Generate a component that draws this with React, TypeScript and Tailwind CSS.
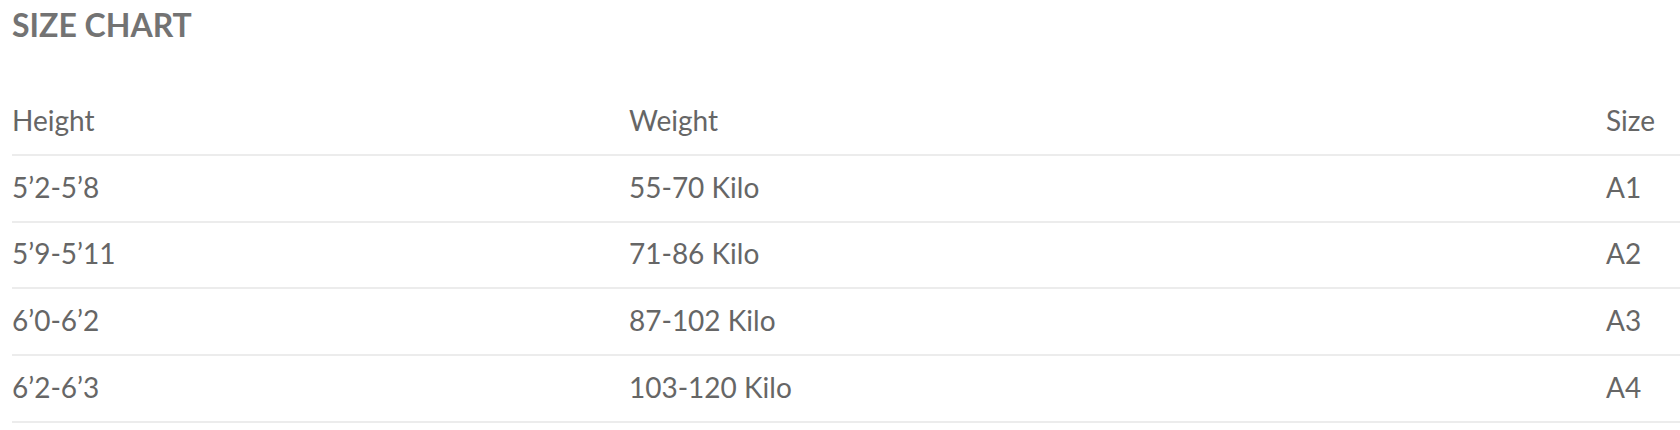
const rows = [
  { height: '5’2-5’8', weight: '55-70 Kilo', size: 'A1' },
  { height: '5’9-5’11', weight: '71-86 Kilo', size: 'A2' },
  { height: '6’0-6’2', weight: '87-102 Kilo', size: 'A3' },
  { height: '6’2-6’3', weight: '103-120 Kilo', size: 'A4' },
];

function Row({ cells }: { cells: string[] }) {
  return (
    <div className="grid h-[66.75px] grid-cols-[617px_977px_1fr] items-center border-b-2 border-[#ececec] pb-[3px]">
      {cells.map((c, i) => (
        <div key={i}>{c}</div>
      ))}
    </div>
  );
}

export default function App() {
  return (
    <div className="min-h-[430px] w-[1680px] overflow-hidden bg-white pl-3 font-['Lato',sans-serif] text-[28px] text-[#666]">
      <h2 className="h-[89px] pt-[6px] text-[32px] font-bold leading-[38px] text-[#737373]">SIZE CHART</h2>
      <Row cells={['Height', 'Weight', 'Size']} />
      {rows.map((r) => (
        <Row key={r.size} cells={[r.height, r.weight, r.size]} />
      ))}
    </div>
  );
}
